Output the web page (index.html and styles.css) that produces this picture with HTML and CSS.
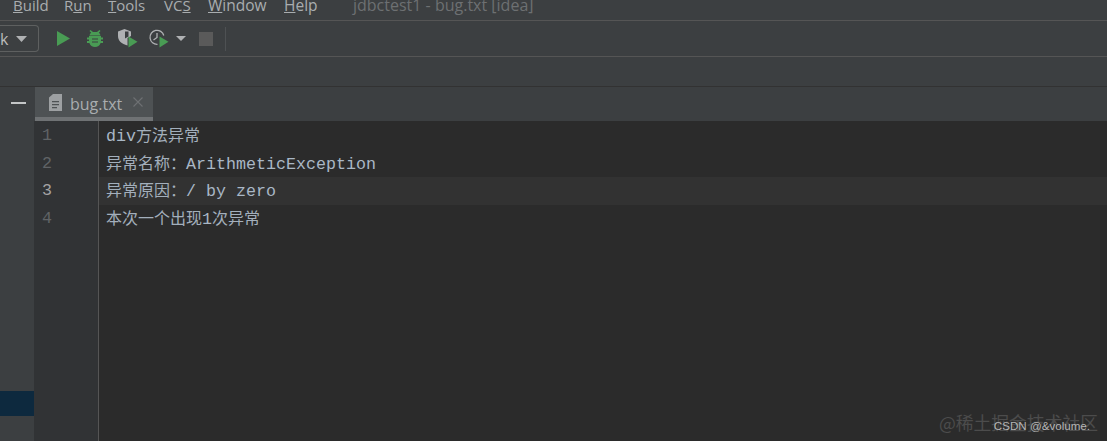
FILE: index.html
```html
<!DOCTYPE html>
<html>
  <head>
    <meta charset="UTF-8" />
    <title>bug.txt</title>
    <link rel="stylesheet" href="styles.css">
  </head>
  <body>
    <nav class="menu-bar">
      <span class="menu-item menu-build"><u>B</u>uild</span>
      <span class="menu-item menu-run">R<u>u</u>n</span>
      <span class="menu-item menu-tools"><u>T</u>ools</span>
      <span class="menu-item menu-vcs">VC<u>S</u></span>
      <span class="menu-item menu-window"><u>W</u>indow</span>
      <span class="menu-item menu-help"><u>H</u>elp</span>
      <span class="window-title">jdbctest1 - bug.txt [idea]</span>
    </nav>

    <div class="toolbar">
      <div class="config-box">
        <span class="config-name">k</span>
        <svg class="caret" width="11" height="6" viewBox="0 0 11 6"><path d="M0 0h11L5.500 6z" fill="#afb1b3" /></svg>
      </div>
      <svg class="tool tool-run" width="13" height="15" viewBox="0 0 13 15"><path d="M0 0L13 7.500 0 15z" fill="#499c54" /></svg>
      <svg class="tool tool-debug" width="16" height="17" viewBox="0 0 16 17">
        <path d="M3.500 0L6 2h4l2.500-2L13.500 1 11.800 2.800C12.800 3.500 13.300 4.400 13.500 5.500H2.500C2.700 4.400 3.200 3.500 4.200 2.800L2.500 1z" fill="#499c54" />
        <path d="M2 6h12v1.500h2v2h-2v1.500h2v2h-2.400C12.800 15.500 10.700 17 8 17s-4.800-1.500-5.600-4H0v-2h2V9.500H0v-2h2z" fill="#499c54" />
        <path d="M5 8.500h6v1H5zM5 11.500h6v1H5z" fill="#3c3f41" />
      </svg>
      <svg class="tool tool-cover" width="20" height="19" viewBox="0 0 20 19">
        <path d="M0 2.500L6.500 0 13 2.500V7L9.500 9V16.500C3.500 14.500 0 12 0 7z" fill="#afb1b3" />
        <path d="M7 2.500h3.500V7.500L7 9.500z" fill="#3c3f41" />
        <path d="M10.500 7.500L19.500 12.800 10.500 18.500z" fill="#499c54" />
      </svg>
      <svg class="tool tool-profile" width="20" height="19" viewBox="0 0 20 19">
        <path d="M8.500 15.300A7 7 0 1 1 14.800 6.500" fill="none" stroke="#afb1b3" stroke-width="1.300" />
        <path d="M8 4V8.500L4.500 11" fill="none" stroke="#afb1b3" stroke-width="1.300" />
        <path d="M10.500 7.500L19.500 12.800 10.500 18.500z" fill="#499c54" />
      </svg>
      <svg class="tool tool-caret" width="10" height="5" viewBox="0 0 10 5"><path d="M0 0h10L5 5z" fill="#afb1b3" /></svg>
      <div class="tool tool-stop"></div>
      <div class="tool-sep"></div>
    </div>

    <div class="nav-path"></div>

    <div class="tab-row">
      <div class="tab-left"><div class="minimize"></div></div>
      <div class="tab">
        <svg class="file-icon" width="13" height="17" viewBox="0 0 13 17">
          <path d="M0 3.500L4 0h9v17H0z" fill="#9da0a2" />
          <path d="M3 7h7v1.200H3zM3 10h7v1.200H3zM3 13h5v1.200H3z" fill="#4e5254" />
        </svg>
        <span class="tab-name">bug.txt</span>
        <svg class="tab-close" width="10" height="10" viewBox="0 0 10 10"><path d="M.5.500l9 9M9.500.500l-9 9" stroke="#6e7173" stroke-width="1.100" /></svg>
      </div>
    </div>

    <main class="work">
      <aside class="side">
        <div class="side-selected"></div>
      </aside>
      <div class="gutter">
        <div class="line-no">1</div>
        <div class="line-no">2</div>
        <div class="line-no line-no-current">3</div>
        <div class="line-no">4</div>
      </div>
      <div class="editor">
        <div class="code-line">div<span class="cjk">方法异常</span></div>
        <div class="code-line"><span class="cjk">异常名称：</span>ArithmeticException</div>
        <div class="code-line code-line-current"><span class="cjk">异常原因：</span>/ by zero</div>
        <div class="code-line"><span class="cjk">本次一个出现</span>1<span class="cjk">次异常</span></div>
      </div>
      <div class="mark mark-juejin">@稀土掘金技术社区</div>
      <div class="mark mark-csdn">CSDN @&amp;volume.</div>
    </main>
  </body>
</html>
```

FILE: styles.css
```css
body {
  margin: 0;
  width: 1107px;
  height: 441px;
  overflow: hidden;
  display: flex;
  flex-direction: column;
  background-color: #3c3f41;
  font-family: "Open Sans", "Liberation Sans", sans-serif;
}

.menu-bar {
  height: 20px;
  flex: none;
  display: flex;
  align-items: flex-end;
  border-bottom: 1px solid #555555;
  padding-left: 13px;
  overflow: hidden;
  font-size: 15px;
  line-height: 20px;
  color: #a9adaf;
}
.menu-item {
  position: relative;
  top: -5px;
}
.menu-build {
  width: 51px;
}
.menu-run {
  width: 44px;
}
.menu-tools {
  width: 56px;
}
.menu-vcs {
  width: 44px;
}
.menu-window {
  width: 76px;
  font-size: 15.500px;
}
.menu-help {
  width: 69px;
  font-size: 15.500px;
}
.window-title {
  color: #6d7072;
  font-size: 16px;
  position: relative;
  top: -5px;
}

.toolbar {
  height: 35px;
  flex: none;
  display: flex;
  align-items: center;
  border-bottom: 1px solid #555555;
}
.config-box {
  width: 39px;
  height: 27px;
  box-sizing: border-box;
  border: 1px solid #5e6060;
  border-left: none;
  border-radius: 0 4px 4px 0;
  display: flex;
  align-items: center;
  justify-content: space-between;
  padding-right: 11px;
  color: #bbbbbb;
  font-size: 16px;
}
.tool {
  flex: none;
}
.tool-run {
  margin-left: 18px;
}
.tool-debug {
  margin-left: 17px;
}
.tool-cover {
  margin-left: 15px;
}
.tool-profile {
  margin-left: 11px;
}
.tool-caret {
  margin-left: 7px;
}
.tool-stop {
  width: 14px;
  height: 14px;
  margin-left: 13px;
  background-color: #5a5a5a;
}
.tool-sep {
  width: 1px;
  height: 24px;
  margin-left: 12px;
  background-color: #4e5153;
}

.nav-path {
  height: 29px;
  flex: none;
  border-bottom: 1px solid #323232;
}

.tab-row {
  height: 34px;
  flex: none;
  display: flex;
  background-color: #3c3f41;
}
.tab-left {
  width: 35px;
  display: flex;
  align-items: center;
  justify-content: center;
  padding-bottom: 2px;
  box-sizing: border-box;
}
.minimize {
  width: 15px;
  height: 2px;
  margin-left: 1px;
  background-color: #c4c6c7;
}
.tab {
  width: 118px;
  box-sizing: border-box;
  background-color: #4e5254;
  border-bottom: 4px solid #6f7274;
  display: flex;
  align-items: center;
  padding-left: 14px;
  padding-top: 3px;
  font-size: 16px;
  color: #a9adaf;
}
.file-icon {
  margin-top: -3px;
}
.tab-name {
  margin-left: 8px;
}
.tab-close {
  margin-left: 11px;
  margin-top: -3px;
}

.work {
  flex: 1;
  display: flex;
  position: relative;
  background-color: #2b2b2b;
}
.side {
  width: 34px;
  flex: none;
  background-color: #3c3f41;
  padding-top: 270px;
  box-sizing: border-box;
}
.side-selected {
  height: 25px;
  background-color: #0d293e;
}
.gutter {
  width: 64px;
  flex: none;
  background-color: #313335;
  border-right: 1px solid #555555;
  padding-top: 1px;
  font-family: "Liberation Mono", monospace;
  font-size: 16.670px;
  color: #606366;
}
.line-no {
  padding-left: 8px;
  height: 27.500px;
  line-height: 27.500px;
}
.line-no-current {
  color: #a4a3a3;
}
.editor {
  flex: 1;
  padding-top: 1px;
  font-family: "Liberation Mono", "Noto Sans CJK SC", monospace;
  font-size: 16.670px;
  color: #a9b7c6;
}
.code-line {
  height: 27.500px;
  line-height: 25.500px;
  padding-left: 7px;
  white-space: nowrap;
}
.code-line-current {
  background-color: #323232;
}
.cjk {
  font-family: "Noto Sans CJK SC", sans-serif;
  font-size: 16px;
  color: #a3afbc;
}

.mark {
  position: absolute;
  white-space: nowrap;
}
.mark-juejin {
  right: 9px;
  bottom: 8px;
  font-family: "Noto Sans CJK SC", sans-serif;
  font-size: 17.800px;
  line-height: 22px;
  color: #4c4c4c;
}
.mark-csdn {
  right: 17px;
  bottom: 7px;
  font-family: "Liberation Sans", sans-serif;
  font-size: 11.600px;
  line-height: 16px;
  color: #b5b5b5;
}
```
